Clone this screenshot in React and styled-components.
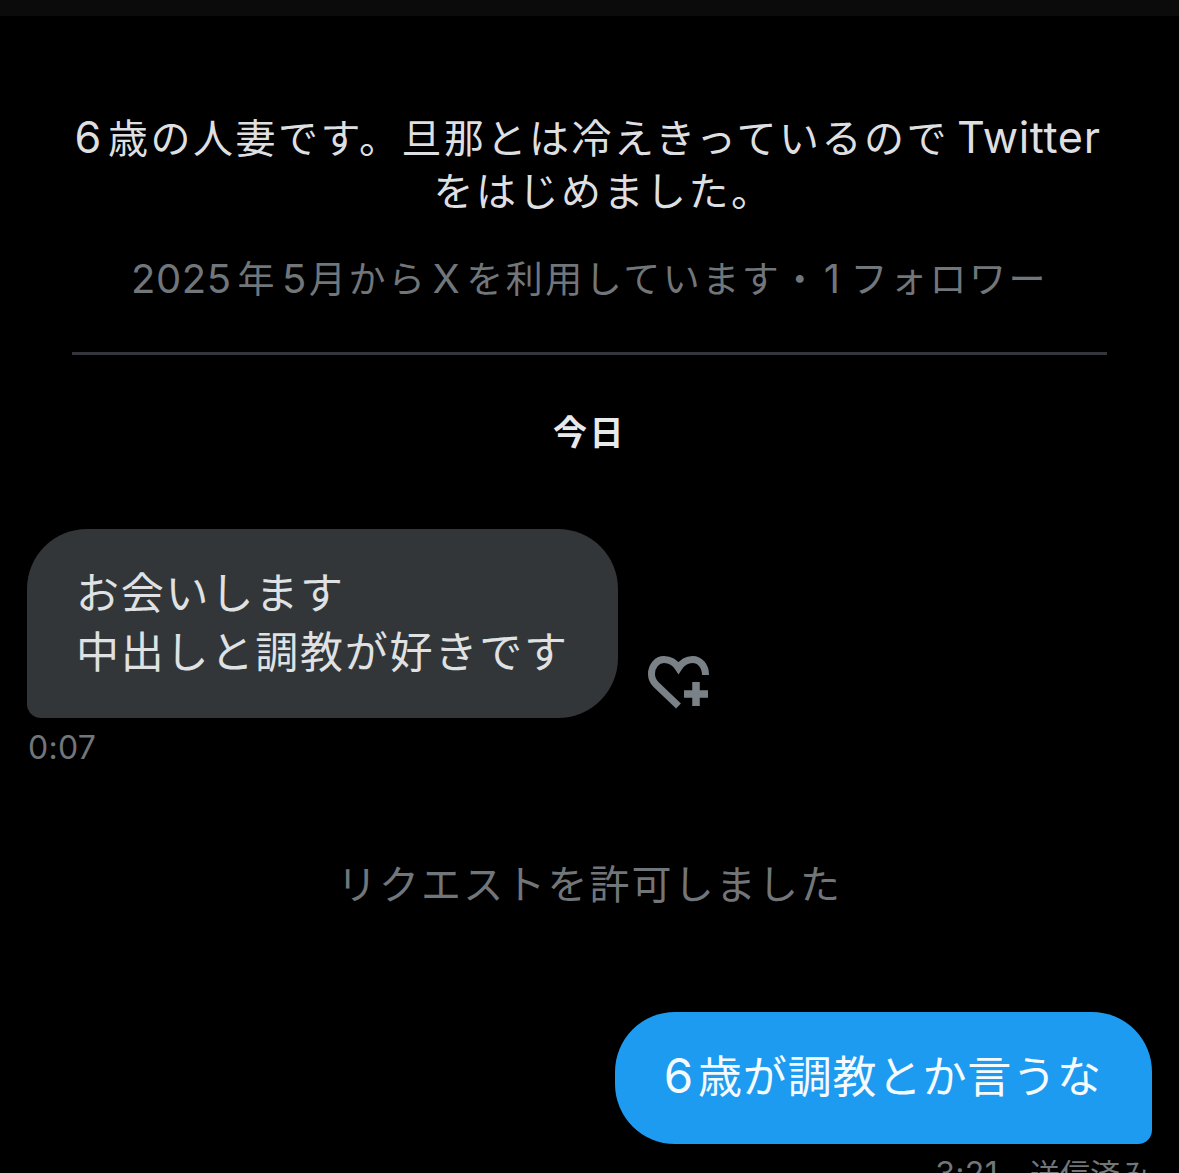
import React from 'react';
import styled, { createGlobalStyle } from 'styled-components';

const GlobalStyle = createGlobalStyle`
  html, body {
    margin: 0;
    background: #000;
  }
  body {
    font-family: Inter, "Noto Sans CJK JP", "Noto Sans", sans-serif;
  }
`;

const Page = styled.div`
  width: 1179px;
  height: 1173px;
  overflow: hidden;
  background: #000;
  display: flex;
  flex-direction: column;
`;

const TopBar = styled.div`
  height: 16px;
  flex: none;
  background: #0b0b0b;
`;

// latin runs sit a bit bigger than the kana and get air on both sides
const Latin = styled.span`
  font-size: 1.08em;
  letter-spacing: 0.6px;
  margin: 0 ${(p) => p.$r || 0}px 0 ${(p) => p.$l || 0}px;
`;

const Tail = styled.span`
  display: inline-block;
  margin-left: 32px;
`;

const Bio = styled.p`
  margin: 95px 0 0;
  padding: 0 74px 0 70px;
  text-align: center;
  font-size: 40px;
  letter-spacing: 2.5px;
  line-height: 53px;
  color: #dedfe0;
`;

const Meta = styled.p`
  margin: 35px 0 0;
  text-align: center;
  font-size: 37px;
  letter-spacing: 2.5px;
  line-height: 52px;
  color: #71767b;
`;

const Divider = styled.div`
  margin: 46px 72px 0;
  height: 3px;
  flex: none;
  background: #35363b;
`;

const DayLabel = styled.div`
  margin-top: 56px;
  text-align: center;
  font-size: 34px;
  letter-spacing: 2.5px;
  line-height: 44px;
  font-weight: 700;
  color: #e7e9ea;
`;

const IncomingRow = styled.div`
  margin: 74px 0 0 27px;
  display: flex;
  align-items: flex-end;
  gap: 30px;
`;

const Bubble = styled.div`
  font-size: ${(p) => (p.$mine ? 44 : 43)}px;
  letter-spacing: ${(p) => (p.$mine ? 0.9 : 1.8)}px;
  line-height: 59px;
  padding: ${(p) => (p.$mine ? '34px 50px 37px 49px' : '35px 49px 36px')};
  background: ${(p) => (p.$mine ? '#1d9bf0' : '#323639')};
  color: ${(p) => (p.$mine ? '#f4fafe' : '#dfe1e2')};
  border-radius: ${(p) => (p.$mine ? '60px 60px 14px 60px' : '60px 60px 60px 14px')};
  white-space: pre-line;
`;

const LikeButton = styled.svg`
  width: 62px;
  height: 54px;
  flex: none;
  margin-bottom: 8px;
  display: block;
`;

const Time = styled.div`
  margin: 8px 0 0 ${(p) => (p.$right ? '0' : '28px')};
  font-size: 32px;
  letter-spacing: 0.3px;
  line-height: 44px;
  color: #71767b;
`;

const Notice = styled.div`
  margin-top: 89px;
  text-align: center;
  font-size: 40px;
  letter-spacing: 2.1px;
  line-height: 52px;
  color: #71767b;
`;

const OutgoingRow = styled.div`
  margin: 101px 27px 0 0;
  display: flex;
  flex-direction: column;
  align-items: flex-end;
`;

const SentLine = styled(Time)`
  margin-right: 2px;
  margin-top: 8px;
  display: flex;
  gap: 32px;
`;

const SentStatus = styled.span`
  font-size: 30px;
  letter-spacing: 0;
`;

export default function App() {
  return (
    <Page>
      <GlobalStyle />
      <TopBar />
      <Bio>
        <Latin $r={6}>6</Latin>歳の人妻です。旦那とは冷えきっているので<Latin $l={8}>Twitter</Latin>
        <Tail>をはじめました。</Tail>
      </Bio>
      <Meta>
        <Latin $r={6}>2025</Latin>年<Latin $l={5} $r={2}>5</Latin>月から<Latin $l={5} $r={6}>X</Latin>を利用しています・<Latin $l={3} $r={10}>1</Latin>フォロワー
      </Meta>
      <Divider />
      <DayLabel>今日</DayLabel>
      <IncomingRow>
        <Bubble>{'お会いします\n中出しと調教が好きです'}</Bubble>
        <LikeButton viewBox="0 0 62 54" fill="none" stroke="#7b8287">
          <path
            d="M30.5 50 L8 28.5 C5 25.5 3.5 22 3.5 18 C3.5 10 9 3.5 16 3.5 C22 3.5 27 6.5 30.5 12 C34 6.5 38.5 3.5 44.5 3.5 C52 3.5 57.5 10 57.5 19"
            strokeWidth="7"
          />
          <path d="M48 26 V50 M36 38 H60" strokeWidth="7.5" />
        </LikeButton>
      </IncomingRow>
      <Time>0:07</Time>
      <Notice>リクエストを許可しました</Notice>
      <OutgoingRow>
        <Bubble $mine>
          <Latin $r={4}>6</Latin>歳が調教とか言うな
        </Bubble>
        <SentLine $right>
          <span>3:21</span>
          <SentStatus>送信済み</SentStatus>
        </SentLine>
      </OutgoingRow>
    </Page>
  );
}
